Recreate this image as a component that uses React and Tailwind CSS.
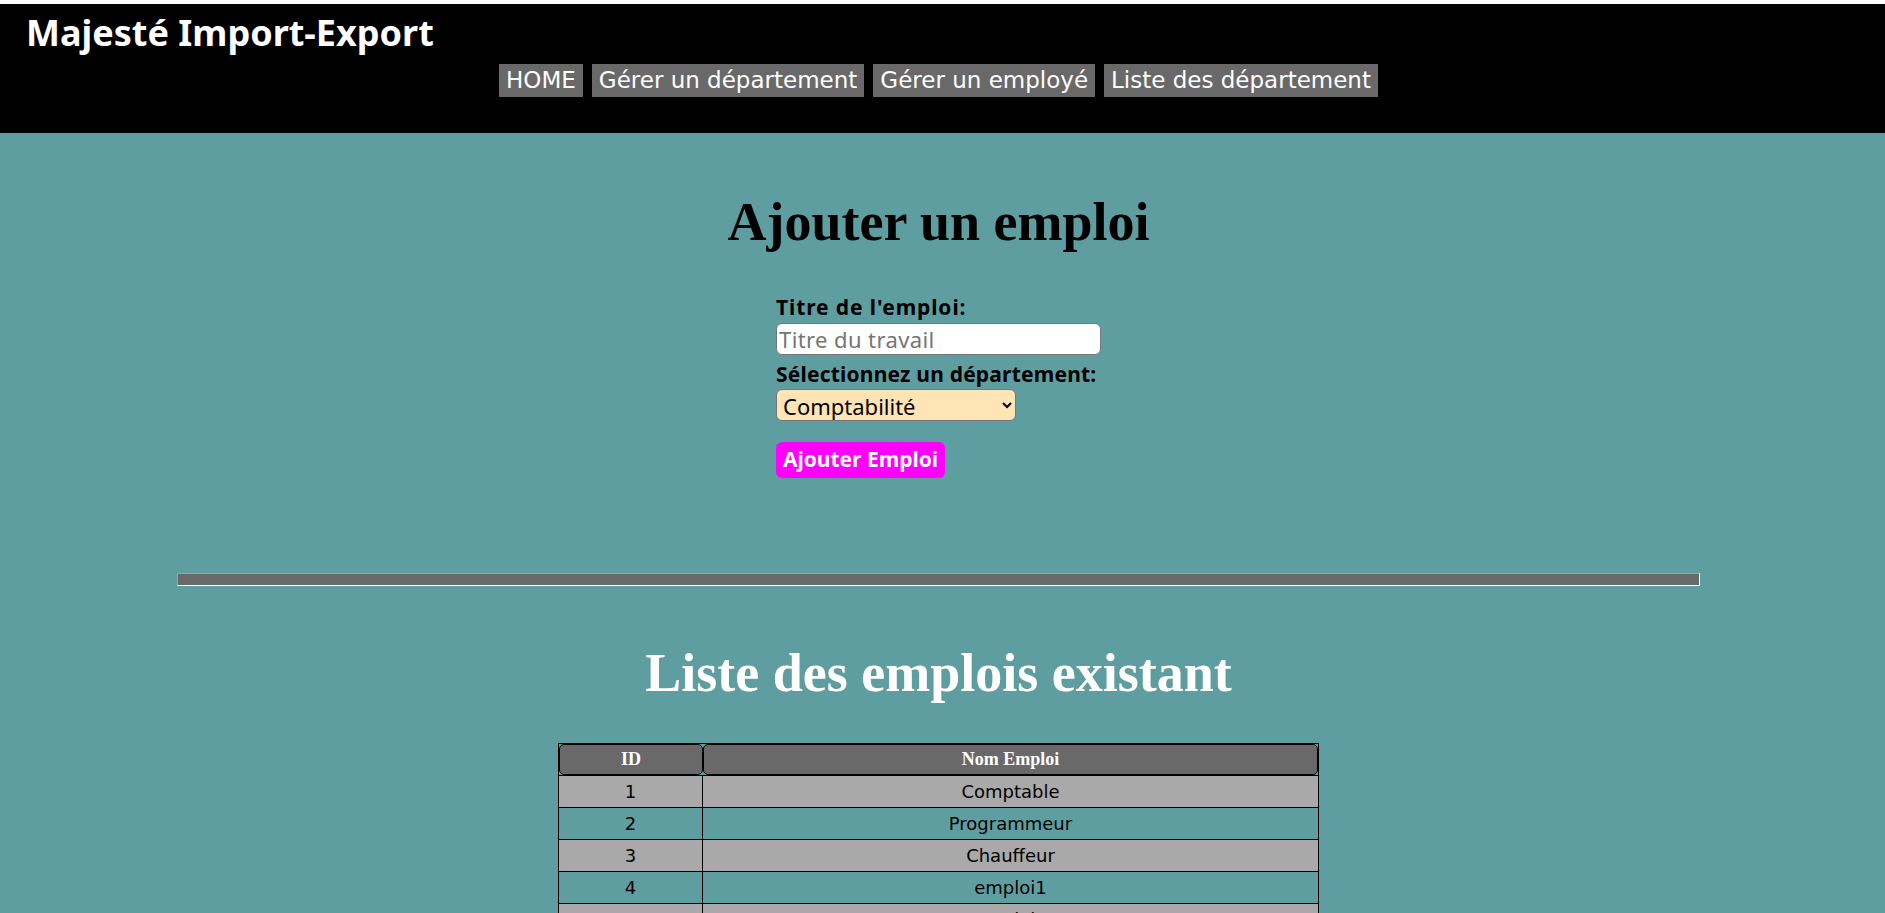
import { useState } from 'react';

const comic = "font-['Comic_Sans_MS','Noto_Sans',sans-serif]";
const tahoma = "font-['DejaVu_Sans',sans-serif]";
const times = "font-['Liberation_Serif',serif]";

const navLinks = ['HOME', 'Gérer un département', 'Gérer un employé', 'Liste des département'];

const emplois = [
  { id: 1, nom: 'Comptable' },
  { id: 2, nom: 'Programmeur' },
  { id: 3, nom: 'Chauffeur' },
  { id: 4, nom: 'emploi1' },
  { id: 5, nom: 'emploi2' },
];

const App = () => {
  const [titre, setTitre] = useState('');

  return (
    <div className="min-h-screen bg-white pt-[4px]">
      {/* header */}
      <header className="h-[129px] bg-black">
        <div className={`${comic} pl-[26px] pt-[9px] text-[36px] leading-[40px] font-bold text-white`}>
          Majesté Import-Export
        </div>
        <nav className={`${tahoma} w-[1877px] flex justify-center gap-[9px] mt-[11px]`}>
          {navLinks.map((l) => (
            <a
              key={l}
              href="#"
              className="h-[33px] px-[7px] flex items-center bg-[#696969] text-white text-[23px]"
            >
              {l}
            </a>
          ))}
        </nav>
      </header>

      <main className="bg-[#5f9ea0] pb-[40px]">
        <div className="w-[1877px] flex flex-col items-center">
          <h1 className={`${times} mt-[58px] text-[54px] leading-[62px] font-bold text-black`}>
            Ajouter un emploi
          </h1>

          <form className={`${comic} w-[325px] mt-[42px] flex flex-col`} onSubmit={(e) => e.preventDefault()}>
            <label className="h-[24px] text-[21px] leading-[24px] font-bold tracking-[0.9px] text-black whitespace-nowrap">
              Titre de l'emploi:
            </label>
            <input
              type="text"
              value={titre}
              onChange={(e) => setTitre(e.target.value)}
              placeholder="Titre du travail"
              className="mt-[4px] h-[32px] w-[325px] px-[2px] bg-white border border-[#767676] rounded-[6px] text-[22px] tracking-[0.4px] text-black placeholder:text-[#757575] outline-none"
            />
            <label className="mt-[7px] h-[24px] text-[21px] leading-[24px] font-bold tracking-[0.2px] text-black whitespace-nowrap">
              Sélectionnez un département:
            </label>
            <select className="mt-[3px] h-[32px] w-[240px] px-[2px] bg-[#ffe4b5] border border-[#767676] rounded-[6px] text-[22px] text-black">
              <option>Comptabilité</option>
              <option>Informatique</option>
              <option>Transport</option>
            </select>
            <button
              type="submit"
              className="mt-[21px] h-[36px] w-[169px] rounded-[6px] bg-[#ff00ff] text-white text-[21px] font-bold"
            >
              Ajouter Emploi
            </button>
          </form>

          <hr className="mt-[95px] w-[1523px] h-[13px] bg-[#696969] border border-t-[#a0a0a0] border-l-[#a0a0a0] border-b-white border-r-white" />

          <h1 className={`${times} mt-[56px] text-[54px] leading-[62px] font-bold text-white`}>
            Liste des emplois existant
          </h1>

          <table className={`${tahoma} mt-[39px] w-[761px] border-separate border-spacing-0 border border-black text-[18px]`}>
            <thead>
              <tr>
                <th className={`${times} w-[144px] h-[31px] bg-[#696969] border border-black rounded-[5px] text-white text-[18px] font-bold`}>
                  ID
                </th>
                <th className={`${times} h-[31px] bg-[#696969] border border-black rounded-[5px] text-white text-[18px] font-bold`}>
                  Nom Emploi
                </th>
              </tr>
            </thead>
            <tbody>
              {emplois.map((e, i) => (
                <tr key={e.id} className={i % 2 === 0 ? 'bg-[#a9a9a9]' : ''}>
                  <td className="h-[32px] p-0 text-center text-black border-t border-r border-black">{e.id}</td>
                  <td className="h-[32px] p-0 text-center text-black border-t border-black">{e.nom}</td>
                </tr>
              ))}
            </tbody>
          </table>
        </div>
      </main>
    </div>
  );
};

export default App;
